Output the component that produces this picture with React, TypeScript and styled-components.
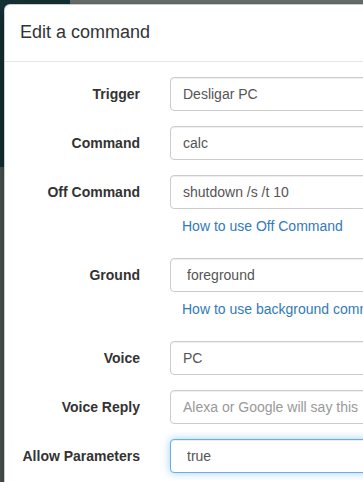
import React from "react";
import styled, { createGlobalStyle, css } from "styled-components";

const Global = createGlobalStyle`
  html, body { margin: 0; padding: 0; overflow: hidden; }
  body {
    font-family: "Liberation Sans", Arial, Helvetica, sans-serif;
    font-size: 14px;
    line-height: 1.42857143;
    color: #333;
  }
  * { box-sizing: border-box; }
`;

const Backdrop = styled.div`
  width: 363px;
  height: 482px;
  overflow: hidden;
  padding: 4px 0 0 4px;
  background:
    linear-gradient(#163336, #163336) 0 0 / 70px 167px no-repeat,
    linear-gradient(#515a58, #515a58) 0 167px / 10px 400px no-repeat,
    #6d7371;
`;

const Modal = styled.div`
  width: 600px;
  background: #fff;
  border: 1px solid rgba(0, 0, 0, 0.2);
  border-radius: 6px;
  box-shadow: 0 5px 15px rgba(0, 0, 0, 0.5);
`;

const Header = styled.div`
  padding: 15px;
  border-bottom: 1px solid #e5e5e5;
`;

const Title = styled.h4`
  margin: 0;
  font-size: 18px;
  font-weight: 500;
  line-height: 1.42857143;
  color: #333;
`;

const Body = styled.div`
  padding: 15px 0;
`;

const FormGroup = styled.div`
  display: flex;
  margin-bottom: 15px;
`;

const Label = styled.label`
  flex: 0 0 150px;
  padding: 7px 15px 0;
  text-align: right;
  font-weight: bold;
  color: #333;
`;

const Field = styled.div`
  flex: 1;
  padding: 0 15px;
`;

const controlCss = css<{ $focused?: boolean }>`
  display: block;
  width: 100%;
  height: 34px;
  padding: 6px 12px;
  font-family: inherit;
  font-size: 14px;
  line-height: 1.42857143;
  color: #555;
  background: #fff;
  border: 1px solid #ccc;
  border-radius: 4px;
  box-shadow: inset 0 1px 1px rgba(0, 0, 0, 0.075);
  outline: none;
  ${(p) =>
    p.$focused &&
    css`
      border-color: #66afe9;
      box-shadow: inset 0 1px 1px rgba(0, 0, 0, 0.075),
        0 0 8px rgba(102, 175, 233, 0.6);
    `}
  &::placeholder { color: #999; }
`;

const Input = styled.input<{ $focused?: boolean }>`
  ${controlCss}
`;

const Select = styled.select<{ $focused?: boolean }>`
  ${controlCss}
  appearance: none;
  padding-left: 16px;
`;

const Help = styled.a`
  display: block;
  margin: 7px 0 7px;
  padding-left: 12px;
  color: #337ab7;
  text-decoration: none;
  white-space: nowrap;
`;

export default function App() {
  return (
    <>
      <Global />
      <Backdrop>
        <Modal>
          <Header>
            <Title>Edit a command</Title>
          </Header>
          <Body>
            <FormGroup>
              <Label>Trigger</Label>
              <Field>
                <Input defaultValue="Desligar PC" />
              </Field>
            </FormGroup>
            <FormGroup>
              <Label>Command</Label>
              <Field>
                <Input defaultValue="calc" />
              </Field>
            </FormGroup>
            <FormGroup>
              <Label>Off Command</Label>
              <Field>
                <Input defaultValue="shutdown /s /t 10" />
                <Help href="#">How to use Off Command</Help>
              </Field>
            </FormGroup>
            <FormGroup>
              <Label>Ground</Label>
              <Field>
                <Select defaultValue="foreground">
                  <option value="foreground">foreground</option>
                  <option value="background">background</option>
                </Select>
                <Help href="#">How to use background command</Help>
              </Field>
            </FormGroup>
            <FormGroup>
              <Label>Voice</Label>
              <Field>
                <Input defaultValue="PC" />
              </Field>
            </FormGroup>
            <FormGroup>
              <Label>Voice Reply</Label>
              <Field>
                <Input placeholder="Alexa or Google will say this" />
              </Field>
            </FormGroup>
            <FormGroup>
              <Label>Allow Parameters</Label>
              <Field>
                <Select $focused defaultValue="true">
                  <option value="true">true</option>
                  <option value="false">false</option>
                </Select>
              </Field>
            </FormGroup>
          </Body>
        </Modal>
      </Backdrop>
    </>
  );
}
